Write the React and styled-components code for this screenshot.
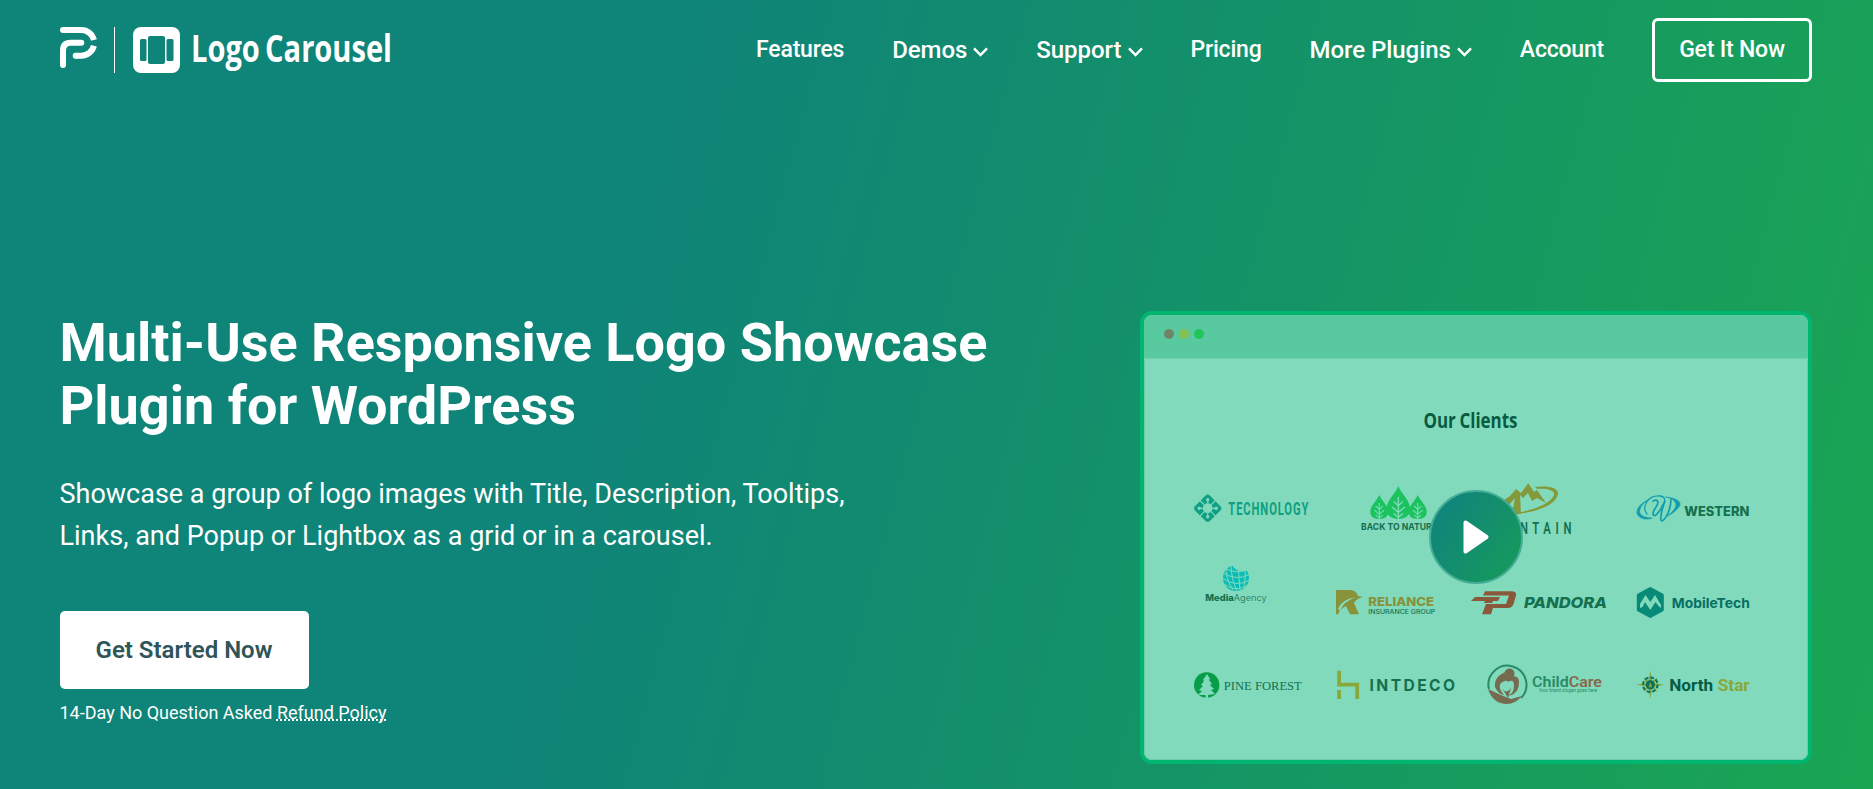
import styled, { createGlobalStyle } from "styled-components";

const GlobalStyle = createGlobalStyle`
  * {
    box-sizing: border-box;
  }
  body {
    margin: 0;
    font-family: Roboto, "Liberation Sans", sans-serif;
    color: #fff;
  }
  a {
    color: inherit;
    text-decoration: none;
  }
  svg {
    overflow: visible;
  }
`;

const Page = styled.div`
  height: 789px;
  padding: 0 61px 0 60px;
  overflow: hidden;
  background: linear-gradient(105deg, #0f8478 34%, #1aa652 101%);
`;
const Header = styled.header`
  height: 100px;
  display: flex;
  justify-content: space-between;
  align-items: center;
`;
const Brand = styled.a`
  display: flex;
  align-items: center;
  height: 46px;
`;
const Divider = styled.span`
  width: 1px;
  height: 46px;
  margin: 0 18px 0 17px;
  background: #fff;
`;
const Nav = styled.nav`
  display: flex;
  align-items: center;
  gap: 48px;
`;
const NavLink = styled.a`
  display: flex;
  align-items: center;
  gap: 6px;
  font-size: ${(props) => (props.$menu ? "24px" : "23px")};
  font-weight: 500;
  letter-spacing: ${(props) => (props.$menu ? "-0.05px" : "-0.2px")};
  line-height: 28px;
  white-space: nowrap;
  padding-bottom: 1px;
  svg {
    margin-top: 4px;
  }
`;
const OutlineButton = styled.a`
  width: 160px;
  height: 64px;
  border: 3px solid #fff;
  border-radius: 6px;
  padding-bottom: 2px;
  display: flex;
  justify-content: center;
  align-items: center;
  font-size: 23px;
  font-weight: 500;
  letter-spacing: -0.2px;
`;
const Hero = styled.main`
  display: flex;
  justify-content: space-between;
  padding-top: 211px;
`;
const Intro = styled.section`
  width: 1000px;
`;
const Title = styled.h1`
  margin: 0 0 0 -0.5px;
  font-size: 54px;
  font-weight: 700;
  line-height: 63px;
`;
const Lead = styled.p`
  margin: 36px 0 0 -0.5px;
  font-size: 27px;
  line-height: 42.3px;
`;
const PrimaryButton = styled.a`
  width: 249px;
  height: 78px;
  margin-top: 53px;
  padding-right: 1px;
  border-radius: 5px;
  background: #fff;
  color: #2f5559;
  display: flex;
  justify-content: center;
  align-items: center;
  font-size: 24px;
  font-weight: 600;
`;
const Note = styled.p`
  margin: 10px 0 0 -0.5px;
  font-size: 18px;
  line-height: 28px;
`;
const PolicyLink = styled.a`
  text-decoration: underline dotted 2px;
  text-decoration-skip-ink: none;
  text-underline-offset: 1px;
`;
const Browser = styled.section`
  position: relative;
  width: 672px;
  height: 453px;
  border: 4px solid #00b570;
  border-radius: 12px;
  background: #81dabb;
`;
const TitleBar = styled.div`
  height: 44px;
  padding: 0 20px 5px;
  display: flex;
  align-items: center;
  gap: 5px;
  background: #59ca9f;
  border-bottom: 1px solid #6dd2ac;
  border-radius: 8px 8px 0 0;
`;
const Dot = styled.span`
  width: 10px;
  height: 10px;
  border-radius: 50%;
  background: ${(props) => props.$color};
`;
const Clients = styled.div`
  height: 401px;
  padding: 49px 0 0 48px;
  border: 1px solid #6dcdaa;
  border-width: 0 1px 1px;
  border-radius: 0 0 8px 8px;
`;
const ClientsTitle = styled.svg`
  display: block;
  margin-left: 228px;
`;
const LogoGrid = styled.div`
  margin: 42px 0 0 -1px;
  display: grid;
  grid-template-columns: 138px 136px 164px 130px;
  grid-template-rows: 84px 98px 50px;
`;
const PlayButton = styled.button`
  position: absolute;
  left: 285px;
  top: 175px;
  width: 94px;
  height: 94px;
  padding: 0;
  border: 2px solid #45ad96;
  border-radius: 50%;
  background: linear-gradient(125deg, #10857a 15%, #16985f 85%);
  display: flex;
  justify-content: center;
  align-items: center;
`;

const Word = ({ x, y, width, size, color = "#14704f", font = "Roboto", ...rest }) => (
  <text
    x={x}
    y={y}
    textLength={width}
    lengthAdjust="spacingAndGlyphs"
    fontSize={size}
    fill={color}
    fontFamily={`${font}, sans-serif`}
    {...rest}
  />
);

const Chevron = () => (
  <svg width="15" height="10" viewBox="0 0 15 10" fill="none">
    <path d="M1 1.300 7.500 8l6.500-6.700" stroke="#fff" strokeWidth="2.500" />
  </svg>
);

const ParentLogo = () => (
  <svg width="37" height="46" viewBox="0 0 37 46" fill="none" stroke="#fff" strokeWidth="6">
    <path d="M3 3H21.300A12.900 12.900 0 0 1 33.900 13" />
    <path d="M3 38V23.500Q3 15.800 10.700 15.800H21.300" strokeLinecap="round" />
    <path d="M33.900 18.800A12.900 12.900 0 0 1 21.300 28.700H15.700" />
    <circle cx="3" cy="3" r="3" fill="#fff" stroke="none" />
    <circle cx="15.700" cy="28.700" r="3" fill="#fff" stroke="none" />
  </svg>
);

const ProductLogo = () => (
  <svg width="260" height="46" viewBox="0 0 260 46">
    <rect width="47" height="46" rx="8" fill="#fff" />
    <g fill="#0f8478">
      <rect x="15" y="9" width="17" height="28" rx="2" />
      <rect x="7" y="12" width="6.500" height="22" rx="1.500" />
      <rect x="33.500" y="12" width="7" height="22" rx="1.500" />
    </g>
    <Word x="58" y="34.500" width="201" size="37" color="#fff" font="Open Sans" fontWeight="700" wordSpacing="-3">
      Logo Carousel
    </Word>
  </svg>
);

const Technology = () => (
  <svg width="138" height="60">
    <g transform="translate(15.700 28.300) rotate(45)">
      <rect x="-10.500" y="-10.500" width="21" height="21" rx="3" fill="#0f9f83" />
      <circle r="5" fill="#81dabb" />
      <g stroke="#81dabb" strokeWidth="1.200" fill="#81dabb">
        {[0, 90, 180, 270].map((a) => (
          <g key={a} transform={`rotate(${a})`}>
            <path d="M0-5V-11M-3.500-3.500-6-6" />
            <circle cx="-6" cy="-6" r="1.100" />
          </g>
        ))}
      </g>
    </g>
    <Word x="36.300" y="35" width="81" size="18.500" color="#0f9f83" fontWeight="700" letterSpacing="1.500">
      TECHNOLOGY
    </Word>
  </svg>
);

const Leaf = ({ x, y, w, h }) => (
  <g transform={`translate(${x} ${y}) scale(${w / 20} ${h / 30})`}>
    <path d="M10 0C13 8 20 13 20 21C20 27 16 30 10 30S0 27 0 21C0 13 7 8 10 0Z" fill="#1bc35e" />
    <path d="M10 10V31M10 18 6 14M10 18 14 14M10 24 4.500 19M10 24 15.500 19M10 28.500 6 25M10 28.500 14 25" stroke="#81dabb" strokeWidth="1.200" fill="none" />
  </g>
);

const Nature = () => (
  <svg width="136" height="60">
    <Leaf x={40.300} y={15} w={18} h={24} />
    <Leaf x={78.700} y={15} w={18} h={24} />
    <Leaf x={56.600} y={6} w={23.500} h={33} />
    <Word x="31" y="50.300" width="76" size="9.500" fontWeight="700" font="Inter">
      BACK TO NATURE
    </Word>
  </svg>
);

const Mountain = () => (
  <svg width="164" height="60">
    <g fill="#83993a">
      <path d="M30 26 38 20 44 16 50 9 55 13 62.300 3.300 68 12 71 10 80 23 71 18 66 21 62 13 57 18 54 15 55 34H46L49 18 38 31Z" />
      <path d="M69 7C82 5 93 8 92 14C90 26 66 34 44 34C68 31 85 23 88 15C89 10 80 8 71 9Z" />
    </g>
    <Word x="15" y="53.700" width="95" size="17" letterSpacing="7" fontWeight="600">
      MOUNTAIN
    </Word>
  </svg>
);

const Western = () => (
  <svg width="130" height="60">
    <g fill="none" stroke="#129dac" strokeWidth="1.300" strokeLinecap="round">
      <path d="M18 20C7 25 4 34 10 37C14 40 19 39 22 38C13 38 8 34 10 29C11 25 15 22 18 20Z" fill="#129dac" strokeWidth="0.800" />
      <path d="M17 34C11 27 18 15 30 16C37 17 35 23 32 26" />
      <path d="M23 21C27 19 30 21 26 27C21 34 23 37 26 35C30 31 33 26 35 21C32 29 29 41 32 41C36 39 41 29 41 19" strokeWidth="1.700" />
      <path d="M36 17C46 18 54 22 48 28C45 32 40 35 37 36C43 32 48 26 45 22C43 19 40 18 36 17Z" fill="#129dac" strokeWidth="0.600" />
    </g>
    <Word x="54.300" y="36" width="65" size="12.500" font="Inter" fontWeight="800">
      WESTERN
    </Word>
  </svg>
);

const MediaAgency = () => (
  <svg width="138" height="60">
    <circle cx="44" cy="14" r="13" fill="#0bbdb8" />
    <g fill="none" stroke="#81dabb" strokeWidth="1">
      <path d="M30 3Q46 12 58 4M29 8Q45 18 58 10M30 14Q44 24 58 16M32 20Q44 29 56 21" />
      <path d="M34 0Q33 14 41 26M39 0Q39 15 45 27M46 0Q47 14 48 26M53 0Q54 14 52 24" />
    </g>
    <path d="M39-1Q43 8 51 7L58 6 52-2H39Z" fill="#81dabb" />
    <Word x="13.300" y="36.700" width="61.500" size="8.800" font="Inter" fontWeight="800">
      Media<tspan fontWeight="300">Agency</tspan>
    </Word>
  </svg>
);

const Reliance = () => (
  <svg width="136" height="60">
    <path d="M6 26H20Q26 26 28 32L33 33Q27 34 24 39L29 50.300H20L16 42Q10 45 8 50.300H6Z" fill="#87923a" />
    <path d="M8 45Q12 35 26 33Q14 37 10 47Z" fill="#81dabb" />
    <Word x="38.300" y="42" width="65.700" size="12" color="#87923a" font="Inter" fontWeight="800">
      RELIANCE
    </Word>
    <Word x="38.300" y="50" width="67" size="6" font="Inter" fontWeight="500">
      INSURANCE GROUP
    </Word>
  </svg>
);

const Pandora = () => (
  <svg width="164" height="60">
    <g fill="#8a593b">
      <path d="M19 27.300H45Q51 27.300 50 31.500L47.500 40Q46 44 42 44H27L25 50.300H16L20 40H40L43 31.500H17Z" />
      <path d="M9 33H34L32 37H27L26 39H18L19 37H5Z" />
    </g>
    <Word x="58" y="44" width="83" size="15.200" font="Inter" fontWeight="800" fontStyle="italic">
      PANDORA
    </Word>
  </svg>
);

const MobileTech = () => (
  <svg width="130" height="60">
    <path d="M20.300 24.500 32.300 31V46L20.300 52.500 8.300 46V31Z" fill="#078a78" stroke="#078a78" strokeWidth="3" strokeLinejoin="round" />
    <path d="M10 44V40L15.500 31 20.300 38 25 31 31 41V44L28.500 42 25.500 38 20.300 46 15 38 12.500 43Z" fill="#81dabb" />
    <Word x="41.800" y="43.700" width="78" size="13.700" color="#076e63" font="Inter" fontWeight="700">
      MobileTech
    </Word>
  </svg>
);

const PineForest = () => (
  <svg width="138" height="50">
    <circle cx="14.700" cy="23" r="12.700" fill="#079d49" />
    <path d="M15 12 18 17 17 18 20 22 18 23 22 27 19 28 23 32 16 33V36H13.500V33L6 33 10 29 7 28 11 24 9 23 12 19 11 18Z" fill="#81dabb" />
    <Word x="31.800" y="28" width="78" size="13" font="Liberation Serif">
      PINE FOREST
    </Word>
  </svg>
);

const Intdeco = () => (
  <svg width="136" height="50">
    <path d="M9.100 8.700V22.600H27.200V37M9.100 28V37" fill="none" stroke="#87a83a" strokeWidth="3.700" />
    <Word x="39.500" y="28.700" width="88" size="16" font="Inter" fontWeight="700" letterSpacing="2.500">
      INTDECO
    </Word>
  </svg>
);

const ChildCare = () => (
  <svg width="164" height="50">
    <path d="M22.900 27A19 19 0 1 1 55 36" fill="none" stroke="#278b66" strokeWidth="2" />
    <g fill="#756b50">
      <path d="M22 27Q34 33 45 37L56 34Q49 42 41 42Q27 42 22 27Z" />
      <circle cx="43.500" cy="11.500" r="5" />
      <path d="M40 10Q28 14 29 25Q32 32 38 33Q31 25 35 21Q41 17 42 20Q48 16 48 24Q48 31 42 34Q53 32 53 20Q53 14 47 14Z" />
      <path d="M36 26Q40 33 45 26L42 36Z" />
    </g>
    <Word x="66" y="25" width="70" size="15" color="#278b66" fontWeight="600">
      Child<tspan fill="#87684c">Care</tspan>
    </Word>
    <Word x="72.700" y="30.300" width="58.500" size="4.500" color="#278b66">
      Your brand slogan goes here
    </Word>
  </svg>
);

const NorthStar = () => (
  <svg width="130" height="50">
    <g transform="translate(20.300 22.700)">
      <path d="M0-14 1.800-4 7-7 4-1.800 14 0 4 1.800 7 7 1.800 4 0 14-1.800 4-7 7-4 1.800-14 0-4-1.800-7-7-1.800-4Z" fill="#87a83a" />
      <circle r="7.300" fill="none" stroke="#087060" strokeWidth="2" strokeDasharray="3.700 2" />
      <circle r="4.500" fill="#087060" />
      <path d="M0-3 1.800 2.500H-1.800Z" fill="#87a83a" />
    </g>
    <Word x="39.200" y="29.300" width="44" size="16" color="#075b42" fontWeight="700">
      North
    </Word>
    <Word x="87.700" y="29.300" width="32" size="16" color="#87a83a" fontWeight="700">
      Star
    </Word>
  </svg>
);

const links = [
  { label: "Features" },
  { label: "Demos", menu: true },
  { label: "Support", menu: true },
  { label: "Pricing" },
  { label: "More Plugins", menu: true },
  { label: "Account" }
];

export default function App() {
  return (
    <Page>
      <GlobalStyle />
      <Header>
        <Brand href="#">
          <ParentLogo />
          <Divider />
          <ProductLogo />
        </Brand>
        <Nav>
          {links.map((l) => (
            <NavLink key={l.label} href="#" $menu={l.menu}>
              {l.label}
              {l.menu && <Chevron />}
            </NavLink>
          ))}
          <OutlineButton href="#">Get It Now</OutlineButton>
        </Nav>
      </Header>
      <Hero>
        <Intro>
          <Title>
            Multi-Use Responsive Logo Showcase
            <br />
            Plugin for WordPress
          </Title>
          <Lead>
            Showcase a group of logo images with Title, Description, Tooltips,
            <br />
            Links, and Popup or Lightbox as a grid or in a carousel.
          </Lead>
          <PrimaryButton href="#">Get Started Now</PrimaryButton>
          <Note>
            14-Day No Question Asked <PolicyLink href="#">Refund Policy</PolicyLink>
          </Note>
        </Intro>
        <Browser>
          <TitleBar>
            <Dot $color="#71846a" />
            <Dot $color="#84c150" />
            <Dot $color="#22c55b" />
          </TitleBar>
          <Clients>
            <ClientsTitle width="110" height="30">
              <Word x="2.500" y="19.500" width="94" size="22" color="#075b42" font="Open Sans" fontWeight="700" wordSpacing="-1">
                Our Clients
              </Word>
            </ClientsTitle>
            <LogoGrid>
              <Technology />
              <Nature />
              <Mountain />
              <Western />
              <MediaAgency />
              <Reliance />
              <Pandora />
              <MobileTech />
              <PineForest />
              <Intdeco />
              <ChildCare />
              <NorthStar />
            </LogoGrid>
          </Clients>
          <PlayButton aria-label="Play">
            <svg width="26" height="34" viewBox="0 0 26 34">
              <path d="M2.500 2.500 23.500 17 2.500 31.500Z" fill="#fff" stroke="#fff" strokeWidth="4" strokeLinejoin="round" />
            </svg>
          </PlayButton>
        </Browser>
      </Hero>
    </Page>
  );
}
